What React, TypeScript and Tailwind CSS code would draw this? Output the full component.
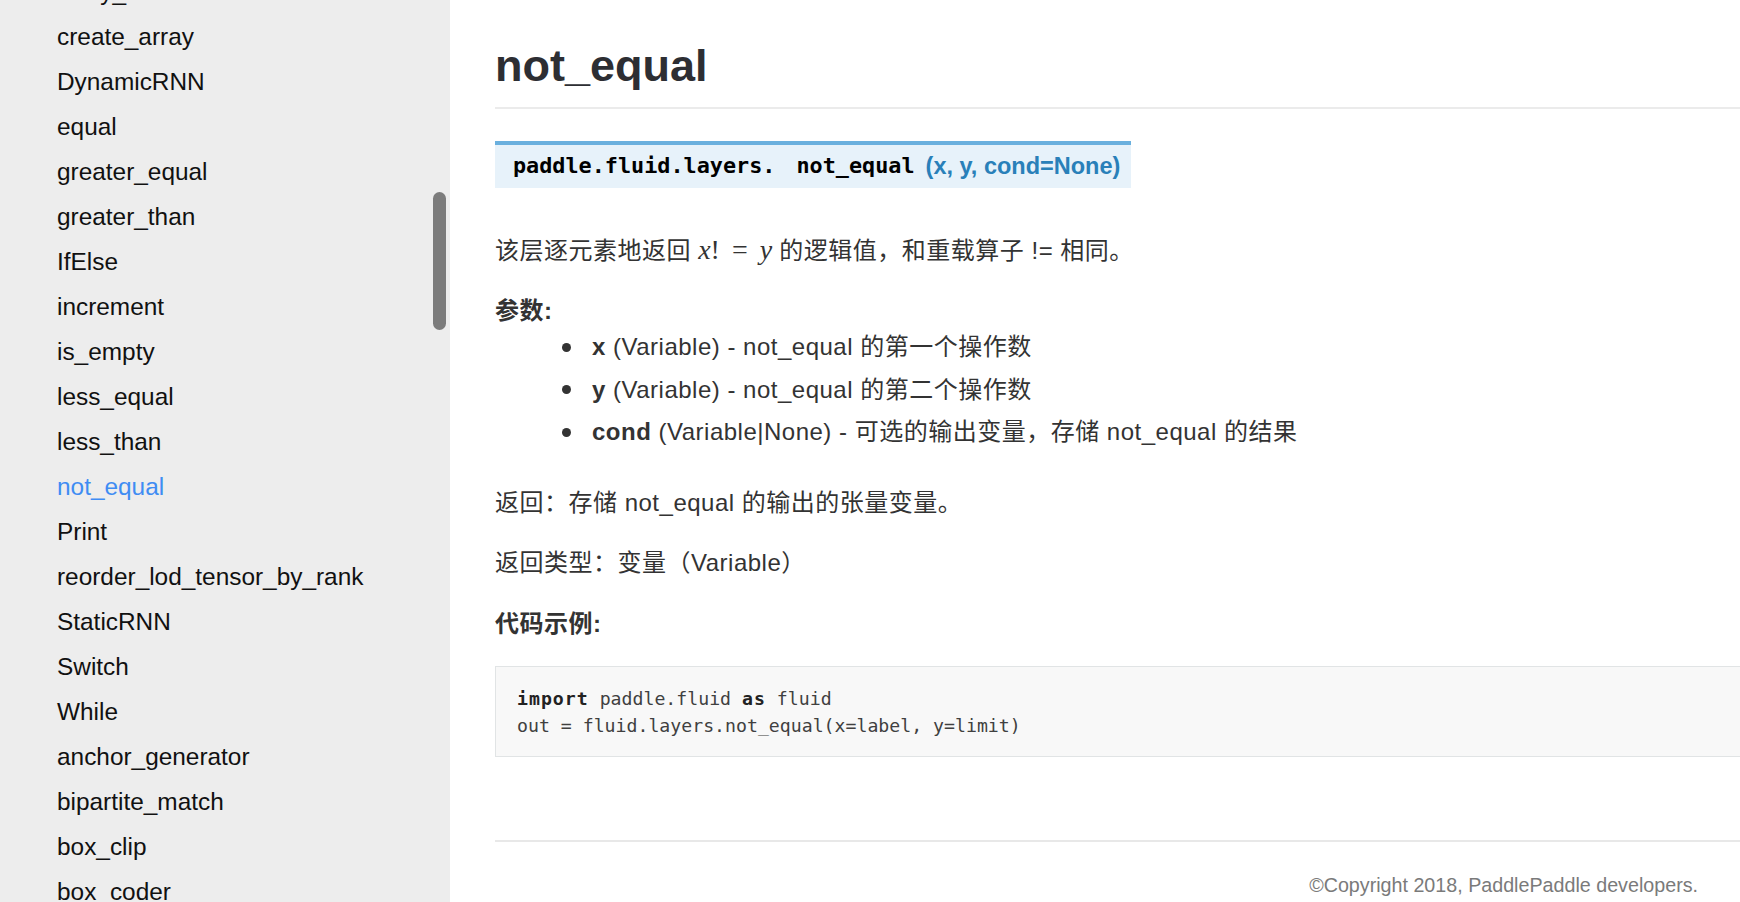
import React from "react";

const items = [
  "array_write",
  "create_array",
  "DynamicRNN",
  "equal",
  "greater_equal",
  "greater_than",
  "IfElse",
  "increment",
  "is_empty",
  "less_equal",
  "less_than",
  "not_equal",
  "Print",
  "reorder_lod_tensor_by_rank",
  "StaticRNN",
  "Switch",
  "While",
  "anchor_generator",
  "bipartite_match",
  "box_clip",
  "box_coder",
  "density_prior_box",
];

const sans = { fontFamily: '"Liberation Sans", Arial, "Noto Sans CJK SC", sans-serif' };
const mono = { fontFamily: '"DejaVu Sans Mono", "Liberation Mono", monospace' };
const serif = { fontFamily: '"Liberation Serif", "DejaVu Serif", serif' };

function Bullet({ children }: { children: React.ReactNode }) {
  return (
    <li className="flex items-center leading-[42.5px]">
      <span className="ml-[67px] h-[9px] w-[9px] shrink-0 rounded-full bg-[#333]" />
      <span className="ml-[21px]">{children}</span>
    </li>
  );
}

export default function App() {
  return (
    <div className="flex h-[902px] w-[1740px] overflow-hidden bg-white" style={sans}>
      <nav className="relative h-full w-[450px] shrink-0 overflow-hidden bg-[#ededed]">
        <ul className="-mt-[31px] pl-[57px]">
          {items.map((it) => (
            <li
              key={it}
              className={
                "h-[45px] text-[24.4px] leading-[45px] whitespace-nowrap " +
                (it === "not_equal" ? "text-[#3f8cf3]" : "text-[#111]")
              }
            >
              {it}
            </li>
          ))}
        </ul>
        <div className="absolute left-[433px] top-[192px] h-[138px] w-[13px] rounded-full bg-[#7c7c7c]" />
      </nav>

      <main className="shrink-0 pl-[45px] pt-[39px]">
        <div className="w-[1300px] text-[24px] text-[#333]">
          <h1 className="text-[45px] font-bold leading-[54px] text-[#2d2e33]">not_equal</h1>
          <div className="mt-[14px] h-[2px] bg-[#ebebeb]" />

          <div className="mt-[32px] flex h-[47px] w-[636px] items-center border-t-[4px] border-[#6ab0de] bg-[#e7f2fa] pl-[18px]">
            <span className="text-[21.8px] font-bold text-black" style={mono}>
              paddle.fluid.layers.
            </span>
            <span className="ml-[21px] text-[21.8px] font-bold text-black" style={mono}>
              not_equal
            </span>
            <span className="ml-[11px] text-[23.5px] font-bold text-[#2980b9]">(x, y, cond=None)</span>
          </div>

          <div className="tracking-[0.5px]">
            <p className="mt-[44px] leading-[36px]">
              该层逐元素地返回{" "}
              <span className="text-[28px] tracking-normal" style={serif}>
                <i>x</i>!<span className="mx-[12px]">=</span>
                <i>y</i>
              </span>{" "}
              的逻辑值，和重载算子 != 相同。
            </p>

            <p className="mt-[27px] font-bold leading-[30px]">参数:</p>
            <ul>
              <Bullet>
                <b>x</b> (Variable) - not_equal 的第一个操作数
              </Bullet>
              <Bullet>
                <b>y</b> (Variable) - not_equal 的第二个操作数
              </Bullet>
              <Bullet>
                <b>cond</b> (Variable|None) - 可选的输出变量，存储 not_equal 的结果
              </Bullet>
            </ul>

            <p className="mt-[31px] leading-[36px]">返回：存储 not_equal 的输出的张量变量。</p>
            <p className="mt-[24px] leading-[36px]">返回类型：变量（Variable）</p>
            <p className="mt-[25px] font-bold leading-[36px]">代码示例:</p>
          </div>

          <div className="mt-[24px] border border-[#e1e4e5] bg-[#f8f8f8] pb-[17px] pl-[21px] pt-[18px]">
            <pre className="text-[18.2px] leading-[27px] text-[#404040]" style={mono}>
              <span className="font-bold tracking-[1px] text-[#222]">import</span> paddle.fluid{" "}
              <span className="font-bold tracking-[1px] text-[#222]">as</span> fluid
              {"\n"}out = fluid.layers.not_equal(x=label, y=limit)
            </pre>
          </div>

          <div className="mt-[83px] h-[2px] bg-[#e8e8e8]" />
          <p className="mt-[31px] pr-[97px] text-right text-[19.7px] leading-[24px] text-[#7a7a7a]">
            ©Copyright 2018, PaddlePaddle developers.
          </p>
        </div>
      </main>
    </div>
  );
}
